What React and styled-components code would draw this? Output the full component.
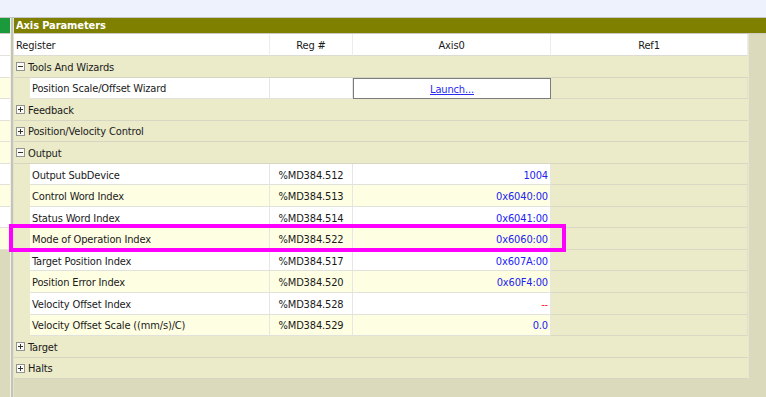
import React from 'react'
import styled, { createGlobalStyle } from 'styled-components'

const GlobalStyle = createGlobalStyle`
  html, body { margin: 0; padding: 0; }
  body {
    font-family: "DejaVu Sans Condensed", "DejaVu Sans", sans-serif;
    font-size: 11px;
    letter-spacing: -0.15px;
    color: #1a1a1a;
    background: #dcdabd;
  }
`

const ROW_H = '21.55px'
const BEIGE = '#ebebca'
const TAN = '#dcdabd'

const Screen = styled.div`
  position: relative;
  height: 397px;
  overflow: hidden;
  display: flex;
  flex-direction: column;
`
const TopStrip = styled.div`
  height: 17px;
  flex: none;
  background: #eef2fc;
  border-bottom: 1px solid #c6c6c6;
`
const Body = styled.div`
  flex: 1;
  display: flex;
`
const LeftPane = styled.div`
  width: 10px;
  flex: none;
  display: flex;
  flex-direction: column;
  background: ${TAN};
`
const LeftHeader = styled.div`
  height: 15px;
  background: #1b9a3b;
  border-bottom: 1px solid #c8c8c0;
`
const LeftRow = styled.div`
  height: ${(p) => (p.$first ? '22px' : ROW_H)};
  box-sizing: border-box;
  background: ${(p) => (p.$alt ? '#fefee2' : '#ffffff')};
  border-bottom: 1px solid #e2e2da;
`
const Splitter = styled.div`
  width: 4px;
  flex: none;
  background: linear-gradient(to right, #f2f2ea 0 1px, #c4c4b4 1px 3px, #e2e2d4 3px 4px);
`
const MainPane = styled.div`
  flex: 1;
  display: flex;
  flex-direction: column;
  min-width: 0;
`
const TitleBar = styled.div`
  height: 15px;
  flex: none;
  background: #808000;
  color: #ffffff;
  font-weight: bold;
  font-size: 11px;
  letter-spacing: -0.1px;
  line-height: 16px;
  padding-left: 2px;
  border-bottom: 1px solid #cacac2;
`
const Table = styled.div`
  width: 734px;
  display: flex;
  flex-direction: column;
  box-shadow: 1px 0 0 #e6e6d6;
`
const Row = styled.div`
  display: grid;
  grid-template-columns: ${(p) => p.$cols};
  height: ${(p) => p.$h || ROW_H};
`
const Cell = styled.div`
  display: flex;
  align-items: center;
  justify-content: ${(p) => p.$align || 'flex-start'};
  box-sizing: border-box;
  padding: 2px 2px 0;
  white-space: nowrap;
  overflow: hidden;
  background: ${(p) => p.$bg || '#ffffff'};
  border-right: 1px solid ${(p) => p.$sep || '#e6e6e2'};
  border-bottom: 1px solid ${(p) => p.$line || '#e2e2dc'};
  color: ${(p) => p.$color || '#1a1a1a'};
`
const Indent = styled.div`
  background: ${BEIGE};
`
const GroupRow = styled.div`
  height: ${ROW_H};
  box-sizing: border-box;
  display: flex;
  align-items: center;
  gap: 3px;
  padding: 1px 0 0 2px;
  background: ${BEIGE};
  border-bottom: 1px solid #d6d6c2;
`
const GroupLabel = styled.span`
  padding-top: 1px;
`
const Expander = styled.span`
  position: relative;
  width: 9px;
  height: 9px;
  box-sizing: border-box;
  border: 1px solid #929292;
  background: #fbfbf4;
  flex: none;
  &::before {
    content: '';
    position: absolute;
    left: 1px;
    right: 1px;
    top: 3px;
    height: 1px;
    background: #333;
  }
  &::after {
    content: '';
    display: ${(p) => (p.$open ? 'none' : 'block')};
    position: absolute;
    top: 1px;
    bottom: 1px;
    left: 3px;
    width: 1px;
    background: #333;
  }
`
const LaunchBox = styled.div`
  display: flex;
  align-items: center;
  justify-content: center;
  box-sizing: border-box;
  padding-top: 2px;
  border: 1px solid #7c7c7c;
  background: #ffffff;
  color: #2a2af0;
  text-decoration: underline;
`
const Highlight = styled.div`
  position: absolute;
  left: 9px;
  top: 224px;
  width: 557px;
  height: 28px;
  box-sizing: border-box;
  border: 4px solid #ff00ff;
  pointer-events: none;
`

const HEAD_COLS = '256px 83px 198px 197px'
const CHILD_COLS = '16px 240px 83px 198px 197px'

const outputRows = [
  ['Output SubDevice', '%MD384.512', '1004'],
  ['Control Word Index', '%MD384.513', '0x6040:00'],
  ['Status Word Index', '%MD384.514', '0x6041:00'],
  ['Mode of Operation Index', '%MD384.522', '0x6060:00'],
  ['Target Position Index', '%MD384.517', '0x607A:00'],
  ['Position Error Index', '%MD384.520', '0x60F4:00'],
  ['Velocity Offset Index', '%MD384.528', '--', true],
  ['Velocity Offset Scale ((mm/s)/C)', '%MD384.529', '0.0'],
]

const leftAlt = [false, false, true, false, true, true, false, true, false, true]

function Group({ label, open }) {
  return (
    <GroupRow>
      <Expander $open={open} />
      <GroupLabel>{label}</GroupLabel>
    </GroupRow>
  )
}

function ChildRow({ name, reg, value, alt, missing }) {
  const bg = alt ? '#fefee2' : '#ffffff'
  return (
    <Row $cols={CHILD_COLS}>
      <Indent />
      <Cell $bg={bg}>{name}</Cell>
      <Cell $bg={bg} $align="center">{reg}</Cell>
      <Cell $bg={bg} $align="flex-end" $color={missing ? '#ff1a1a' : '#2323f0'}>{value}</Cell>
      <Cell $bg={BEIGE} $line="#d8d8c4" $sep="#e0e0cc" />
    </Row>
  )
}

export default function App() {
  return (
    <Screen>
      <GlobalStyle />
      <TopStrip />
      <Body>
        <LeftPane>
          <LeftHeader />
          {leftAlt.map((alt, i) => (
            <LeftRow key={i} $alt={alt} $first={i === 0} />
          ))}
        </LeftPane>
        <Splitter />
        <MainPane>
          <TitleBar>Axis Parameters</TitleBar>
          <Table>
            <Row $cols={HEAD_COLS} $h="22px">
              <Cell $sep="#ececec" $line="#dcdcd2">Register</Cell>
              <Cell $sep="#ececec" $line="#dcdcd2" $align="center">Reg #</Cell>
              <Cell $sep="#ececec" $line="#dcdcd2" $align="center">Axis0</Cell>
              <Cell $sep="#ececec" $line="#dcdcd2" $align="center">Ref1</Cell>
            </Row>
            <Group label="Tools And Wizards" open />
            <Row $cols={CHILD_COLS}>
              <Indent />
              <Cell>Position Scale/Offset Wizard</Cell>
              <Cell />
              <LaunchBox>Launch...</LaunchBox>
              <Cell $bg={BEIGE} $line="#d8d8c4" $sep="#e0e0cc" />
            </Row>
            <Group label="Feedback" />
            <Group label="Position/Velocity Control" />
            <Group label="Output" open />
            {outputRows.map(([name, reg, value, missing], i) => (
              <ChildRow key={name} name={name} reg={reg} value={value} missing={missing} alt={i % 2 === 1} />
            ))}
            <Group label="Target" />
            <Group label="Halts" />
          </Table>
        </MainPane>
      </Body>
      <Highlight />
    </Screen>
  )
}
